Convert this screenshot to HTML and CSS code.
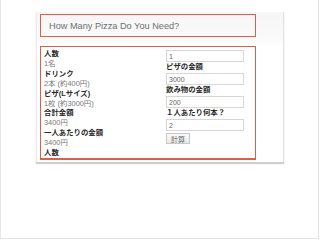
FILE: index.html
```html
<!DOCTYPE html>
<html lang="ja">
<head>
    <meta charset="UTF-8">
    <title>How Many Pizza Do You Need?</title>
    <link rel="stylesheet" href="styles.css">
</head>
<body>
<div class="slide">
    <div class="window">
        <header class="title-bar">
            <h1>How Many Pizza Do You Need?</h1>
        </header>
        <div class="content">
            <div class="result">
                <p class="label">人数</p>
                <p>1名</p>
                <p class="label">ドリンク</p>
                <p>2本 (約400円)</p>
                <p class="label">ピザ(Lサイズ)</p>
                <p>1枚 (約3000円)</p>
                <p class="label">合計金額</p>
                <p>3400円</p>
                <p class="label">一人あたりの金額</p>
                <p>3400円</p>
                <p class="label">人数</p>
            </div>
            <form class="inputs">
                <input type="text" value="1">
                <label>ピザの金額</label>
                <input type="text" value="3000">
                <label>飲み物の金額</label>
                <input type="text" value="200">
                <label>１人あたり何本？</label>
                <input type="text" value="2">
                <button type="button">計算</button>
            </form>
        </div>
    </div>
</div>
</body>
</html>
```

FILE: styles.css
```css
* {
    box-sizing: border-box;
}

body {
    margin: 0;
    background: #fff;
    font-family: "Liberation Sans", "Noto Sans CJK JP", sans-serif;
}

.slide {
    width: 319px;
    height: 239px;
    border: 1px solid #e4e4e4;
    border-top: none;
    padding: 12px 0 0 35px;
}

.window {
    width: 248px;
    height: 150px;
    padding-left: 3px;
    background: linear-gradient(#f6f6f6, #fafafa 28px, #fff 34px);
    border-left: 1px solid #ececec;
    border-right: 1px solid #e2e2e2;
    box-shadow: 0 2px 1px #cfcfcf;
    padding-top: 2px;
}

.title-bar {
    width: 216px;
    height: 23px;
    border: 1px solid #d8614c;
    padding-left: 8px;
    display: flex;
    align-items: center;
}

.title-bar h1 {
    margin: 0;
    font-size: 9.2px;
    font-weight: normal;
    color: #6e6e6e;
}

.content {
    margin-top: 9px;
    width: 216px;
    height: 114px;
    border: 1px solid #d8614c;
    border-bottom-width: 2px;
    display: flex;
    padding: 2px 0 0 3px;
    overflow: hidden;
    background: #fff;
}

.result {
    width: 122px;
    font-size: 7.4px;
    line-height: 9.9px;
    color: #777;
}

.result p {
    margin: 0;
}

.result .label {
    font-weight: bold;
    color: #2a2a2a;
}

.inputs {
    display: flex;
    flex-direction: column;
    align-items: flex-start;
    padding-top: 1px;
}

.inputs input {
    width: 78px;
    height: 12px;
    border: 1px solid #d6d6d6;
    padding: 0 2px;
    font-family: inherit;
    font-size: 7px;
    color: #666;
    margin: 0;
}

.inputs label {
    font-size: 7.4px;
    font-weight: bold;
    color: #2a2a2a;
    line-height: 10.5px;
    height: 11px;
}

.inputs button {
    margin-top: 2px;
    width: 24px;
    height: 11px;
    padding: 0;
    border: 1px solid #c8c8c8;
    background: linear-gradient(#fafafa, #e8e8e8);
    font-family: inherit;
    font-size: 7px;
    color: #666;
}
```
